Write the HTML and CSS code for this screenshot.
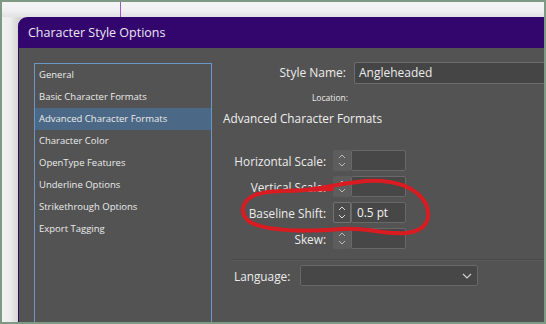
FILE: index.html
```html
<!DOCTYPE html>
<html>
<head>
<meta charset="utf-8">
<link rel="stylesheet" href="styles.css">
</head>
<body>
<div class="screen">
  <div class="topstrip"><span class="vline"></span></div>
  <div class="stage">
    <div class="dialog">
      <div class="titlebar">Character Style Options</div>
      <div class="dbody">
        <ul class="cats">
          <li>General</li>
          <li>Basic Character Formats</li>
          <li class="sel">Advanced Character Formats</li>
          <li>Character Color</li>
          <li>OpenType Features</li>
          <li>Underline Options</li>
          <li>Strikethrough Options</li>
          <li>Export Tagging</li>
        </ul>
        <div class="main">
          <div class="namerow">
            <span class="namelabel">Style Name:</span>
            <div class="namefield">Angleheaded</div>
          </div>
          <div class="locrow">Location:</div>
          <h2 class="heading">Advanced Character Formats</h2>
          <div class="opts">
            <div class="optrow">
              <span class="olabel">Horizontal Scale:</span>
              <span class="spin dim"><svg width="18" height="21" viewBox="0 0 18 21"><polyline points="6,8 9,5 12,8" /><polyline points="6,13 9,16 12,13" /></svg></span>
              <span class="field"></span>
            </div>
            <div class="optrow">
              <span class="olabel">Vertical Scale:</span>
              <span class="spin dim"><svg width="18" height="21" viewBox="0 0 18 21"><polyline points="6,8 9,5 12,8" /><polyline points="6,13 9,16 12,13" /></svg></span>
              <span class="field"></span>
            </div>
            <div class="optrow">
              <span class="olabel">Baseline Shift:</span>
              <span class="spin active"><svg width="18" height="21" viewBox="0 0 18 21"><polyline points="6,8 9,5 12,8" /><polyline points="6,13 9,16 12,13" /></svg></span>
              <span class="field">0.5 pt</span>
            </div>
            <div class="optrow">
              <span class="olabel">Skew:</span>
              <span class="spin dim"><svg width="18" height="21" viewBox="0 0 18 21"><polyline points="6,8 9,5 12,8" /><polyline points="6,13 9,16 12,13" /></svg></span>
              <span class="field"></span>
            </div>
            <div class="sep"></div>
            <div class="langrow">
              <span class="langlabel">Language:</span>
              <div class="dropdown"><svg width="10" height="6" viewBox="0 0 10 6"><polyline points="1,1 5,5 9,1" /></svg></div>
            </div>
          </div>
        </div>
      </div>
    </div>
  </div>
  <svg class="scribble" width="542" height="320" viewBox="2 2 542 320">
    <path d="M 292 191 C 318 190, 340 183, 366 181 C 394 179, 417 187, 426 204 C 432 219, 426 231, 406 233 C 384 235, 366 227, 342 229 C 302 232, 266 231, 250 222 C 239 214, 241 201, 255 195 C 268 190, 290 191, 332 189" />
  </svg>
</div>
</body>
</html>
```

FILE: styles.css
```css
* { box-sizing: border-box; }
html, body { margin: 0; padding: 0; }
body {
  background: #7f9a84;
  width: 546px;
  height: 324px;
  padding: 2px;
  font-family: "Open Sans", "Noto Sans", sans-serif;
}
.screen {
  position: relative;
  width: 542px;
  height: 320px;
  overflow: hidden;
  display: flex;
  flex-direction: column;
  background: #f2f2f4;
}
.topstrip {
  height: 15px;
  flex: none;
  background: linear-gradient(to bottom, #f5f5f8 0, #f1f1f4 8px, #e2e2e4 15px);
  display: flex;
}
.vline {
  display: block;
  width: 1px;
  height: 15px;
  margin-left: 118px;
  background: #9a5cc0;
}
.stage {
  flex: 1;
  display: flex;
  padding-left: 16px;
  background: linear-gradient(to right, #f2f2f2 0, #ececec 8px, #d6d6d6 16px);
}
.dialog {
  width: 560px;
  flex: none;
  display: flex;
  flex-direction: column;
}
.titlebar {
  height: 31px;
  line-height: 31px;
  padding-left: 10px;
  background: #33066e;
  color: #ece6f4;
  font-size: 12.5px;
  border-top-left-radius: 9px;
}
.dbody {
  flex: 1;
  display: flex;
  gap: 11px;
  background: #535353;
  border-left: 1px solid #2e0a62;
  padding: 14px 0 0 15px;
}
.cats {
  list-style: none;
  margin: 1px 0 0 0;
  padding: 0;
  width: 178px;
  height: 300px;
  flex: none;
  border: 1px solid #6b97c8;
  color: #ebebeb;
  font-size: 9.5px;
}
.cats li {
  height: 22px;
  line-height: 22px;
  padding-left: 4px;
}
.cats li.sel {
  background: #4b6986;
}
.main {
  flex: 1;
  display: flex;
  flex-direction: column;
  color: #ececec;
}
.namerow {
  display: flex;
  align-items: center;
  gap: 8px;
  height: 21px;
}
.namelabel {
  width: 123px;
  text-align: right;
  font-size: 12px;
}
.namefield {
  flex: 1;
  height: 22px;
  line-height: 20px;
  background: #454545;
  border: 1px solid #6c6c6c;
  border-right: none;
  border-radius: 2px 0 0 2px;
  padding-left: 4px;
  font-size: 12px;
}
.locrow {
  width: 125px;
  text-align: right;
  font-size: 8.5px;
  line-height: 12px;
  margin-top: 9px;
}
.heading {
  margin: 6px 0 0 0;
  font-weight: normal;
  font-size: 11.8px;
  line-height: 16px;
  color: #f0f0f0;
}
.opts {
  margin-top: 24px;
  padding-left: 9px;
  display: flex;
  flex-direction: column;
  gap: 5px;
}
.optrow {
  display: flex;
  align-items: center;
  height: 21px;
}
.olabel {
  width: 94px;
  text-align: right;
  margin-right: 7px;
  font-size: 11.8px;
}
.spin {
  width: 18px;
  height: 21px;
  border-radius: 2px 0 0 2px;
  display: flex;
}
.spin svg polyline {
  fill: none;
  stroke: #b9b9b9;
  stroke-width: 1;
}
.spin.dim { background: #5d5d5d; }
.spin.active {
  border: 1px solid #727272;
  background: #4c4c4c;
}
.spin.active svg { margin: -1px; }
.spin.active svg polyline { stroke: #dcdcdc; }
.field {
  width: 55px;
  height: 21px;
  background: #474747;
  border: 1px solid #686868;
  border-radius: 2px;
  line-height: 19px;
  padding-left: 5px;
  font-size: 11.8px;
  color: #f2f2f2;
}
.sep {
  height: 1px;
  margin-top: 5px;
  background: #4a4a4a;
  box-shadow: 0 1px 0 #5a5a5a;
}
.langrow {
  display: flex;
  align-items: center;
  height: 21px;
  padding-left: 2px;
  gap: 8px;
}
.langlabel {
  width: 58px;
  font-size: 11.8px;
}
.dropdown {
  width: 178px;
  height: 21px;
  background: #474747;
  border: 1px solid #686868;
  border-radius: 2px;
  display: flex;
  align-items: center;
  justify-content: flex-end;
  padding-right: 5px;
}
.dropdown svg polyline {
  fill: none;
  stroke: #d0d0d0;
  stroke-width: 1.2;
}
.scribble {
  position: absolute;
  left: 0;
  top: 0;
  pointer-events: none;
}
.scribble path {
  fill: none;
  stroke: #d81c22;
  stroke-width: 4;
  stroke-linecap: round;
  stroke-linejoin: round;
}
```
